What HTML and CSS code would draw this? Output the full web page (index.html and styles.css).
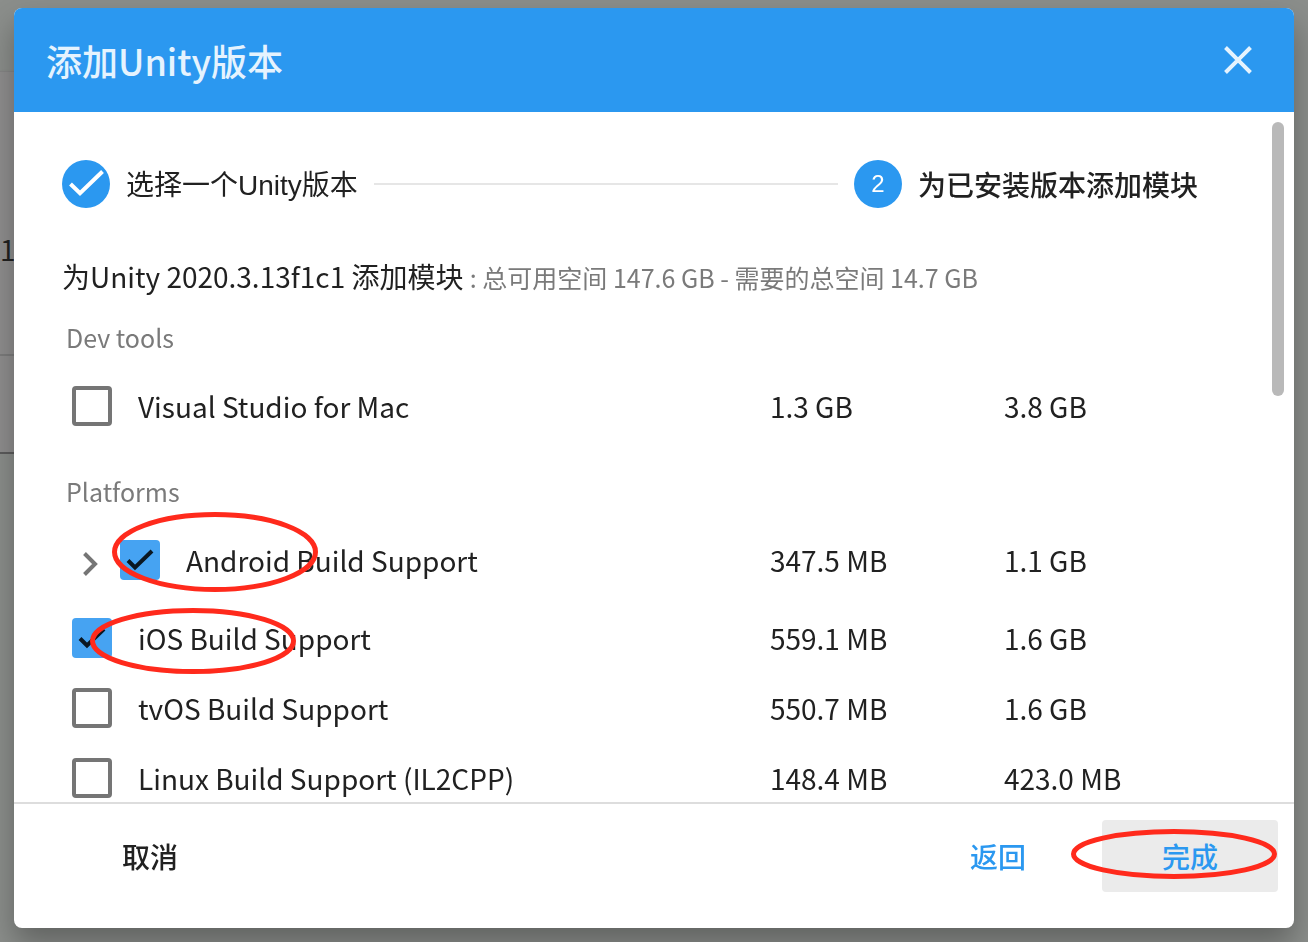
FILE: index.html
```html
<!DOCTYPE html>
<html lang="zh-CN">
<head>
<meta charset="utf-8">
<meta name="viewport" content="width=device-width, initial-scale=1">
<title>添加Unity版本</title>
<link rel="stylesheet" href="styles.css">
</head>
<body>
<main class="page">
  <section class="page-card">
    <div class="page-row page-row-main">1</div>
    <div class="page-row"></div>
  </section>
</main>

<div class="overlay">
  <div class="modal" role="dialog" aria-modal="true" aria-labelledby="modal-title">
    <header class="modal-header">
      <h1 class="modal-title" id="modal-title">添加Unity版本</h1>
      <button class="close" type="button" aria-label="关闭">
        <svg width="48" height="48" viewBox="0 0 48 48" fill="none" stroke="currentColor" stroke-width="4"><path d="M11.5 11.5l25 25M36.500 11.500l-25 25"/></svg>
      </button>
    </header>

    <div class="modal-body">
      <ol class="stepper">
        <li class="step">
          <span class="step-icon"><svg width="48" height="48" viewBox="0 0 48 48" fill="none" stroke="currentColor" stroke-width="4"><path d="M8.500 24L18 33.300 40.500 11.500"/></svg></span>
          <span class="step-label">选择一个<span class="latin">Unity</span>版本</span>
        </li>
        <li class="step-line" aria-hidden="true"></li>
        <li class="step step-current" aria-current="step">
          <span class="step-icon latin">2</span>
          <span class="step-label">为已安装版本添加模块</span>
        </li>
      </ol>

      <h2 class="summary">为Unity 2020.3.13f1c1 添加模块 <span class="summary-space">: 总可用空间 147.6 GB - 需要的总空间 14.7 GB</span></h2>

      <table class="modules">
        <colgroup><col><col class="col-download"><col class="col-disk"></colgroup>
        <tbody>
          <tr class="group"><th colspan="3" scope="rowgroup">Dev tools</th></tr>
          <tr class="tall">
            <td><div class="module"><input class="check" type="checkbox" id="vs"><label for="vs">Visual Studio for Mac</label></div></td>
            <td>1.3 GB</td><td>3.8 GB</td>
          </tr>
        </tbody>
        <tbody>
          <tr class="group group-next"><th colspan="3" scope="rowgroup">Platforms</th></tr>
          <tr class="tall">
            <td><div class="module">
              <button class="expand" type="button" aria-label="展开"><svg width="48" height="40" viewBox="0 0 48 40" fill="none" stroke="currentColor" stroke-width="4"><path d="M12.500 13.500L23 24 12.500 34.500"/></svg></button>
              <input class="check" type="checkbox" id="android" checked><label for="android">Android Build Support</label>
              <svg class="mark mark-android" width="206" height="80" viewBox="0 0 206 80" aria-hidden="true"><ellipse cx="103" cy="40" rx="100.500" ry="37.500"/></svg>
            </div></td>
            <td>347.5 MB</td><td>1.1 GB</td>
          </tr>
          <tr>
            <td><div class="module"><input class="check" type="checkbox" id="ios" checked><label for="ios">iOS Build Support</label>
              <svg class="mark mark-ios" width="206" height="66" viewBox="0 0 206 66" aria-hidden="true"><ellipse cx="103" cy="33" rx="100.500" ry="30.500"/></svg>
            </div></td>
            <td>559.1 MB</td><td>1.6 GB</td>
          </tr>
          <tr>
            <td><div class="module"><input class="check" type="checkbox" id="tvos"><label for="tvos">tvOS Build Support</label></div></td>
            <td>550.7 MB</td><td>1.6 GB</td>
          </tr>
          <tr>
            <td><div class="module"><input class="check" type="checkbox" id="linux"><label for="linux">Linux Build Support (IL2CPP)</label></div></td>
            <td>148.4 MB</td><td>423.0 MB</td>
          </tr>
        </tbody>
      </table>
      <div class="scroll-thumb" aria-hidden="true"></div>
    </div>

    <footer class="modal-footer">
      <button class="action cancel" type="button">取消</button>
      <button class="action primary" type="button">返回</button>
      <button class="action primary focused" type="button">完成
        <svg class="mark mark-done" width="206" height="50" viewBox="0 0 206 50" aria-hidden="true"><ellipse cx="103" cy="25" rx="100.500" ry="22.500"/></svg>
      </button>
    </footer>
  </div>
</div>
</body>
</html>
```
FILE: styles.css
```css
* { box-sizing: border-box; }

body {
  margin: 0;
  background: #8b8e8b;
  color: #212121;
  font: 28px/40px "Noto Sans CJK SC", sans-serif;
}

button {
  padding: 0;
  border: 0;
  background: none;
  color: inherit;
  font: inherit;
  cursor: pointer;
}

/* Page behind the dialog */
.page {
  padding-top: 72px;
  padding-right: 48px;
}

.page-card {
  border-bottom: 2px solid #5c5c5c;
  background: #8f8e8e;
  box-shadow: 0 -1px 0 #858585, 0 2px 4px rgba(0, 0, 0, 0.3);
}

.page-row {
  height: 96px;
}

.page-row-main {
  display: flex;
  align-items: center;
  height: 284px;
  padding-bottom: 72px;
  padding-top: 144px;
  border-bottom: 2px solid #7c7c7c;
}

/* Dialog */
.overlay {
  position: fixed;
  inset: 0;
  display: flex;
  padding: 8px 14px 14px;
}

.modal {
  flex: 1;
  display: flex;
  flex-direction: column;
  min-width: 0;
  overflow: hidden;
  border-radius: 8px;
  background: #fff;
  box-shadow: 0 16px 30px rgba(0, 0, 0, 0.3);
}

.modal-header {
  display: flex;
  align-items: center;
  justify-content: space-between;
  height: 104px;
  padding: 0 32px;
  background: #2b98f0;
  color: #e5f3fe;
}

.modal-title {
  margin: 0;
  font-size: 36px;
  font-weight: 500;
}

.close,
.expand {
  display: flex;
}

.modal-body {
  position: relative;
  flex: 1;
  min-height: 0;
  overflow: hidden;
  padding: 48px 48px 0;
}

.stepper {
  display: flex;
  align-items: center;
  gap: 16px;
  margin: 0;
  padding: 0 48px 0 0;
  list-style: none;
}

.step {
  display: flex;
  align-items: center;
  gap: 16px;
}

.step-current {
  font-weight: 500;
}

.latin {
  font-family: "Liberation Sans", sans-serif;
}

.step-icon {
  display: flex;
  align-items: center;
  justify-content: center;
  width: 48px;
  height: 48px;
  border-radius: 50%;
  background: #2b98f0;
  color: #fff;
  font-size: 24px;
  font-weight: 400;
}

.step-line {
  flex: 1;
  height: 2px;
  background: #e6e6e6;
}

.summary {
  margin: 48px 0 18px;
  font-size: 28px;
  font-weight: 400;
}

.summary-space,
.group {
  color: #7a7a7a;
  font-size: 25px;
}

.modules {
  width: 100%;
  table-layout: fixed;
  border-collapse: collapse;
}

.col-download { width: 234px; }
.col-disk { width: 244px; }

.modules th {
  height: 48px;
  padding: 0 4px 4px;
  font-weight: 400;
  text-align: left;
}

.group-next th {
  height: 68px;
  padding-top: 20px;
}

.modules td {
  height: 70px;
  padding: 0 2px;
}

.modules td:first-child {
  padding: 0;
}

.modules .tall td {
  height: 86px;
}

.module {
  position: relative;
  display: flex;
  align-items: center;
  height: 40px;
  padding-left: 10px;
}

.expand {
  color: #757575;
}

.check {
  appearance: none;
  width: 40px;
  height: 40px;
  margin: 0 26px 0 0;
  border: 4px solid #757575;
  border-radius: 4px;
}

.check:checked {
  border: 0;
  background: #46a3f2 url("data:image/svg+xml,%3Csvg xmlns='http://www.w3.org/2000/svg' viewBox='0 0 40 40' fill='none' stroke='%230a1722' stroke-width='4'%3E%3Cpath d='M8 20.500L15 27.500 32 11'/%3E%3C/svg%3E") center / 40px 40px no-repeat;
}

.scroll-thumb {
  position: absolute;
  top: 10px;
  right: 10px;
  width: 12px;
  height: 274px;
  border-radius: 6px;
  background: #b9b9b9;
}

.modal-footer {
  display: flex;
  gap: 16px;
  padding: 16px 16px 36px 48px;
  border-top: 2px solid #ddd;
}

.action {
  position: relative;
  width: 176px;
  height: 72px;
  border-radius: 4px;
  font-weight: 500;
}

.cancel { margin-right: auto; }
.primary { color: #2b98f0; }
.focused { background: #ebebeb; }

/* Hand-drawn emphasis rings */
.mark {
  position: absolute;
  fill: none;
  stroke: #ff2a1c;
  stroke-width: 5px;
  pointer-events: none;
}

.mark-android { left: 50px; top: -28px; }
.mark-ios { left: 28px; top: -10px; }
.mark-done { left: -31px; top: 9px; }
```
